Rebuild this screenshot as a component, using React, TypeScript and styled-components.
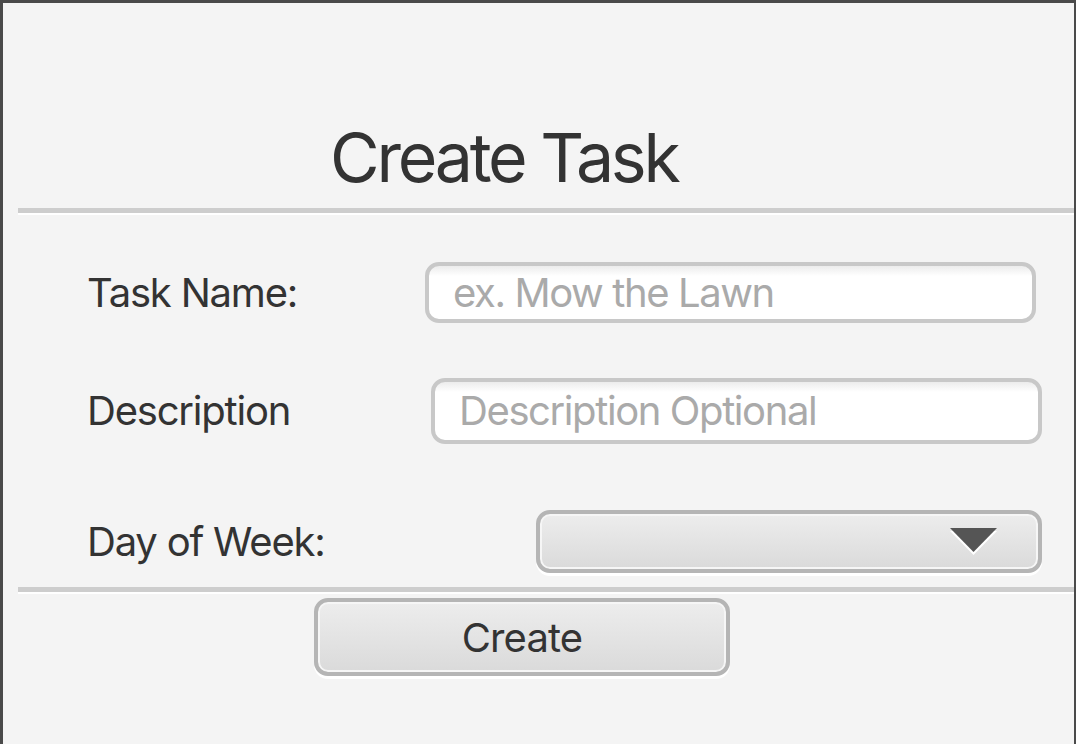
import React from "react";
import styled, { createGlobalStyle } from "styled-components";

const Global = createGlobalStyle`
  html, body { margin: 0; padding: 0; background: #f4f4f4; }
  * { box-sizing: border-box; }
`;

const Frame = styled.div`
  width: 1076px;
  height: 744px;
  background: #f4f4f4;
  border-top: 3px solid #4a4a4a;
  border-left: 3px solid #4a4a4a;
  border-right: 2px solid #4a4a4a;
  display: flex;
  flex-direction: column;
  font-family: Inter, "Noto Sans", sans-serif;
  color: #333333;
  overflow: hidden;
`;

const Heading = styled.h1`
  margin: 113px 0 0 327px;
  font-size: 68px;
  font-weight: 400;
  line-height: 82px;
  height: 82px;
  letter-spacing: -3.25px;
  color: #333333;
`;

const Separator = styled.div<{ $top: number }>`
  margin: ${(p) => p.$top}px 0 0 15px;
  height: 7px;
  border-top: 5px solid #cdcdcd;
  border-bottom: 2px solid #ffffff;
`;

const Form = styled.div`
  display: flex;
  flex-direction: column;
  padding-left: 84px;
`;

const Row = styled.div<{ $top: number; $labelCol: number; $fieldW: number; $h: number }>`
  margin-top: ${(p) => p.$top}px;
  display: grid;
  grid-template-columns: ${(p) => p.$labelCol}px ${(p) => p.$fieldW}px;
  height: ${(p) => p.$h}px;
  align-items: center;
`;

const Label = styled.span`
  font-size: 40px;
  line-height: 48px;
  color: #333333;
  letter-spacing: -1.2px;
  white-space: nowrap;
`;

const Field = styled.div<{ $h: number }>`
  height: ${(p) => p.$h}px;
  border: 4px solid #c8c8c8;
  border-radius: 14px;
  background: linear-gradient(#ececec 0px, #ffffff 10px, #ffffff 100%);
  display: flex;
  align-items: center;
  padding-left: 24px;
`;

const Placeholder = styled.span`
  font-size: 40px;
  line-height: 48px;
  color: #aaaaaa;
  letter-spacing: -1.4px;
  white-space: nowrap;
`;

const Combo = styled.div<{ $h: number }>`
  height: ${(p) => p.$h}px;
  border: 4px solid #b5b5b5;
  border-radius: 14px;
  background: linear-gradient(#ededed, #dadada);
  box-shadow: inset 0 0 0 2px #f6f6f6, 0 3px 0 #ffffff;
  display: flex;
  align-items: center;
  justify-content: flex-end;
  padding-right: 41px;
`;

const Button = styled.button`
  margin: 4px 0 0 311px;
  width: 416px;
  height: 78px;
  border: 4px solid #b5b5b5;
  border-radius: 14px;
  background: linear-gradient(#ededed, #dadada);
  box-shadow: inset 0 0 0 2px #f6f6f6, 0 3px 0 #ffffff;
  font-family: Inter, "Noto Sans", sans-serif;
  font-size: 40px;
  color: #333333;
  letter-spacing: -0.9px;
  padding: 0;
  cursor: pointer;
`;

const Arrow = () => (
  <svg width="47" height="27" viewBox="0 0 47 27">
    <polygon points="0,3 47,3 23.5,27" fill="#ffffff" />
    <polygon points="0,0 47,0 23.5,24" fill="#555555" />
  </svg>
);

export default function App() {
  return (
    <>
      <Global />
      <Frame>
        <Heading>Create Task</Heading>
        <Separator $top={10} />
        <Form>
          <Row $top={47} $labelCol={425 - 87} $fieldW={611} $h={61}>
            <Label>Task Name:</Label>
            <Field $h={61}>
              <Placeholder>ex. Mow the Lawn</Placeholder>
            </Field>
          </Row>
          <Row $top={55} $labelCol={431 - 87} $fieldW={611} $h={66}>
            <Label>Description</Label>
            <Field $h={66}>
              <Placeholder>Description Optional</Placeholder>
            </Field>
          </Row>
          <Row $top={66} $labelCol={536 - 87} $fieldW={506} $h={63}>
            <Label>Day of Week:</Label>
            <Combo $h={63}>
              <Arrow />
            </Combo>
          </Row>
        </Form>
        <Separator $top={14} />
        <Button>Create</Button>
      </Frame>
    </>
  );
}
